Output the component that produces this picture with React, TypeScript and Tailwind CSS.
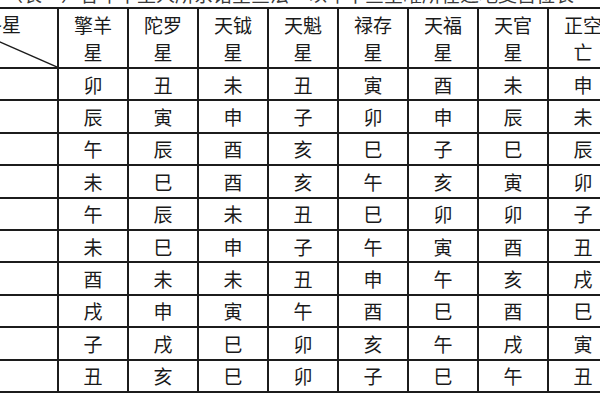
import React from "react";

const headers: [string, string][] = [
  ["擎羊", "星"],
  ["陀罗", "星"],
  ["天钺", "星"],
  ["天魁", "星"],
  ["禄存", "星"],
  ["天福", "星"],
  ["天官", "星"],
  ["正空", "亡"],
];

const cols: string[][] = [
  ["卯", "辰", "午", "未", "午", "未", "酉", "戌", "子", "丑"],
  ["丑", "寅", "辰", "巳", "辰", "巳", "未", "申", "戌", "亥"],
  ["未", "申", "酉", "酉", "未", "申", "未", "寅", "巳", "巳"],
  ["丑", "子", "亥", "亥", "丑", "子", "丑", "午", "卯", "卯"],
  ["寅", "卯", "巳", "午", "巳", "午", "申", "酉", "亥", "子"],
  ["酉", "申", "子", "亥", "卯", "寅", "午", "巳", "午", "巳"],
  ["未", "辰", "巳", "寅", "卯", "酉", "亥", "酉", "戌", "午"],
  ["申", "未", "辰", "卯", "子", "丑", "戌", "巳", "寅", "丑"],
];

const rows = [0, 1, 2, 3, 4, 5, 6, 7, 8, 9];

export default function App() {
  return (
    <div
      className="w-[600px] h-[400px] overflow-hidden bg-white text-[#1a1a1a]"
      style={{ fontFamily: '"Noto Sans CJK SC", "Noto Sans", sans-serif' }}
    >
      <div className="h-[7px] overflow-hidden">
        <div className="-mt-[17px] pl-[4px] whitespace-nowrap text-[19px] leading-[22px] text-[#3a3a3a]">
          （表一）各年干生人所系诸星查法　以年干查星曜所在之地支宫位表
        </div>
      </div>
      <div className="-ml-[45px] w-max bg-[#1c1c1c] p-[2px]">
        <div className="grid grid-cols-[100px_repeat(8,68px)] grid-rows-[58px_repeat(10,30.4px)] gap-[2px]">
          <div className="relative bg-white">
            <svg className="absolute inset-0" width="100" height="58" viewBox="0 0 100 58">
              <line x1="0" y1="14" x2="100" y2="58" stroke="#1c1c1c" strokeWidth="1.4" />
            </svg>
            <div className="relative flex justify-end pr-[36px] pt-[1px] text-[19px] leading-[27px]">各星</div>
          </div>
          {headers.map(([a, b], i) => (
            <div key={i} className="flex flex-col items-center justify-center bg-white text-[19px] leading-[27px]">
              <span>{a}</span>
              <span>{b}</span>
            </div>
          ))}
          {rows.map((r) => (
            <React.Fragment key={r}>
              <div className="bg-white" />
              {cols.map((c, ci) => (
                <div key={ci} className="flex items-center justify-center bg-white text-[19px] leading-none">
                  {c[r]}
                </div>
              ))}
            </React.Fragment>
          ))}
        </div>
      </div>
    </div>
  );
}
